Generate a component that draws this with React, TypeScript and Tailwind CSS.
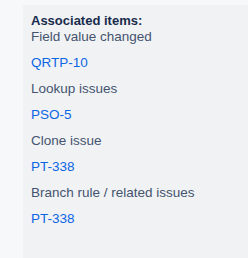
const items = [
  { label: 'Field value changed', key: 'QRTP-10' },
  { label: 'Lookup issues', key: 'PSO-5' },
  { label: 'Clone issue', key: 'PT-338' },
  { label: 'Branch rule / related issues', key: 'PT-338' },
];

export default function App() {
  return (
    <div className="h-[258px] w-[248px] overflow-hidden bg-[#f7f8f9] pl-[23px] pt-[5px] font-['Liberation_Sans',Arial,sans-serif] text-[13.5px]">
      <div className="h-full bg-[#f1f2f4] pl-2 pt-[8px] leading-4">
        <div className="text-[13px] font-bold text-[#172b4d]">Associated items:</div>
        {items.map((item, i) => (
          <div key={i} className={i === 0 ? '' : 'mt-[10px]'}>
            <div className="text-[#44546f]">{item.label}</div>
            <a href="#" className="mt-[10px] block text-[#0c66e4]">{item.key}</a>
          </div>
        ))}
      </div>
    </div>
  );
}
